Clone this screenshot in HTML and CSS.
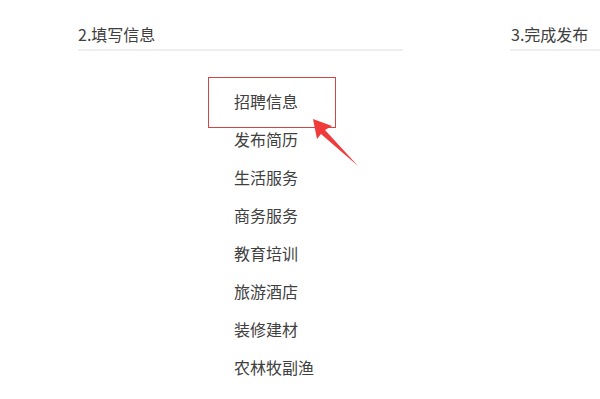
FILE: index.html
```html
<!DOCTYPE html>
<html lang="zh-CN">
<head>
    <meta charset="UTF-8">
    <title>填写信息</title>
    <link rel="stylesheet" href="styles.css">
</head>
<body>
    <div class="steps">
        <div class="step">2.填写信息</div>
        <div class="step step-last">3.完成发布</div>
    </div>

    <ul class="category-list">
        <li>招聘信息</li>
        <li>发布简历</li>
        <li>生活服务</li>
        <li>商务服务</li>
        <li>教育培训</li>
        <li>旅游酒店</li>
        <li>装修建材</li>
        <li>农林牧副渔</li>
    </ul>

    <!-- annotation -->
    <div class="mark-box"></div>
    <svg class="mark-arrow" width="600" height="399" viewBox="0 0 600 399">
        <polygon points="313,119 332,126 325,130 358,166 321,134 317,139" fill="#f03b3b"/>
    </svg>
</body>
</html>
```

FILE: styles.css
```css
* {
    margin: 0;
    padding: 0;
    box-sizing: border-box;
}

body {
    font-family: "Microsoft YaHei", "Noto Sans CJK SC", sans-serif;
    background: #fff;
    color: #333;
    width: 600px;
    height: 399px;
    overflow: hidden;
    position: relative;
}

.steps {
    display: flex;
    gap: 107px;
    padding: 24px 0 0 78px;
}

.step {
    flex-shrink: 0;
    width: 325px;
    font-size: 16px;
    line-height: 20px;
    padding-bottom: 5px;
    border-bottom: 2px solid #eee;
    color: #404040;
}

.step-last {
    flex: 1;
    width: auto;
    min-width: 0;
    white-space: nowrap;
    padding-left: 1px;
}

.category-list {
    list-style: none;
    padding: 31px 0 0 234px;
}

.category-list li {
    font-size: 16px;
    line-height: 38px;
    height: 38px;
    color: #404040;
}

.mark-box {
    position: absolute;
    left: 208px;
    top: 77px;
    width: 128px;
    height: 51px;
    border: 1px solid #d64545;
}

.mark-arrow {
    position: absolute;
    left: 0;
    top: 0;
}
```
